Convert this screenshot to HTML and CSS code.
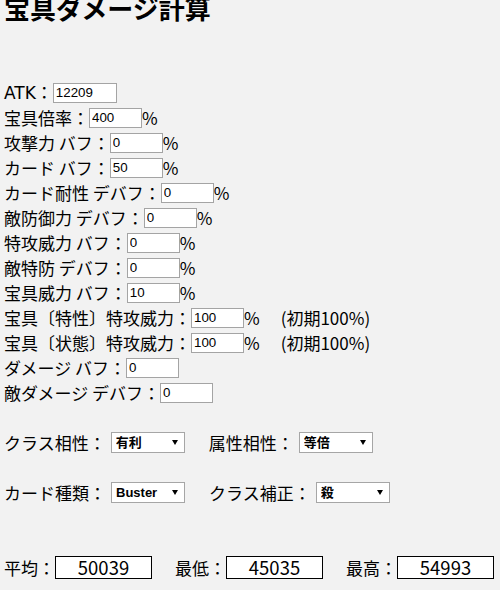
FILE: index.html
```html
<!DOCTYPE html>
<html lang="ja">
<head>
<meta charset="utf-8">
<title>宝具ダメージ計算</title>
<link rel="stylesheet" href="styles.css">
</head>
<body>
<h1 class="title">宝具ダメージ計算</h1>
<div class="form">
  <div class="row"><span class="label"><span class="latin">ATK</span>：</span><input class="num wide" type="text" value="12209"></div>
  <div class="row"><span class="label">宝具倍率：</span><input class="num" type="text" value="400"><span class="pct">%</span></div>
  <div class="row"><span class="label">攻撃力 バフ：</span><input class="num" type="text" value="0"><span class="pct">%</span></div>
  <div class="row"><span class="label">カード バフ：</span><input class="num" type="text" value="50"><span class="pct">%</span></div>
  <div class="row"><span class="label">カード耐性 デバフ：</span><input class="num" type="text" value="0"><span class="pct">%</span></div>
  <div class="row"><span class="label">敵防御力 デバフ：</span><input class="num" type="text" value="0"><span class="pct">%</span></div>
  <div class="row"><span class="label">特攻威力 バフ：</span><input class="num" type="text" value="0"><span class="pct">%</span></div>
  <div class="row"><span class="label">敵特防 デバフ：</span><input class="num" type="text" value="0"><span class="pct">%</span></div>
  <div class="row"><span class="label">宝具威力 バフ：</span><input class="num" type="text" value="10"><span class="pct">%</span></div>
  <div class="row"><span class="label">宝具〔特性〕特攻威力：</span><input class="num" type="text" value="100"><span class="pct">%</span><span class="note">(初期100%)</span></div>
  <div class="row"><span class="label">宝具〔状態〕特攻威力：</span><input class="num" type="text" value="100"><span class="pct">%</span><span class="note">(初期100%)</span></div>
  <div class="row"><span class="label">ダメージ バフ：</span><input class="num" type="text" value="0"></div>
  <div class="row"><span class="label">敵ダメージ デバフ：</span><input class="num" type="text" value="0"></div>

  <div class="row sel-row first-sel">
    <span class="group"><span class="label">クラス相性：</span><span class="select"><select><option>有利</option><option>等倍</option><option>不利</option></select></span></span>
    <span class="group"><span class="label">属性相性：</span><span class="select"><select><option>等倍</option><option>有利</option><option>不利</option></select></span></span>
  </div>
  <div class="row sel-row">
    <span class="group"><span class="label">カード種類：</span><span class="select"><select><option>Buster</option><option>Arts</option><option>Quick</option></select></span></span>
    <span class="group"><span class="label">クラス補正：</span><span class="select"><select><option>殺</option><option>剣</option><option>弓</option></select></span></span>
  </div>

  <div class="row results">
    <span class="group"><span class="label">平均：</span><output class="result">50039</output></span>
    <span class="group"><span class="label">最低：</span><output class="result">45035</output></span>
    <span class="group"><span class="label">最高：</span><output class="result">54993</output></span>
  </div>
</div>
</body>
</html>
```
FILE: styles.css
```css
html, body {
  margin: 0;
  padding: 0;
  background: #f2f2f2;
}

body {
  font-family: "Noto Sans CJK JP", sans-serif;
  font-size: 17px;
  color: #000;
  overflow: hidden;
}

.title {
  margin: -5px 0 59px 0;
  padding-left: 4px;
  font-size: 26px;
  line-height: 26px;
  font-weight: bold;
}

.form {
  padding-left: 4px;
}

.row {
  display: flex;
  align-items: center;
  height: 25px;
  white-space: pre;
  line-height: 25px;
}

.latin {
  font-family: "DejaVu Sans", sans-serif;
}

.num {
  box-sizing: border-box;
  width: 53px;
  height: 20px;
  margin: 0;
  padding: 0 2px;
  border: 1px solid #a4a4a4;
  background: #fff;
  font-family: "Liberation Sans", Arial, sans-serif;
  font-size: 13.33px;
  color: #000;
  outline: none;
}

.num.wide {
  width: 64px;
}

.note {
  margin-left: 21px;
}

.sel-row {
  margin-top: 25px;
}

.group {
  display: flex;
  align-items: center;
}

.sel-row .group + .group {
  margin-left: 24px;
}

.select {
  position: relative;
  display: inline-flex;
  margin-left: 5px;
}

.select select {
  -webkit-appearance: none;
  appearance: none;
  box-sizing: border-box;
  width: 74px;
  height: 21px;
  margin: 0;
  padding: 0 0 0 4px;
  border: 1px solid #a6a6a6;
  border-radius: 0;
  background: #fff;
  font-family: "Liberation Sans", "Noto Sans CJK JP", sans-serif;
  font-size: 13px;
  font-weight: bold;
  color: #000;
  outline: none;
}

.select::after {
  content: "";
  position: absolute;
  right: 7px;
  top: 8px;
  width: 0;
  height: 0;
  border-left: 3.5px solid transparent;
  border-right: 3.5px solid transparent;
  border-top: 5px solid #000;
  pointer-events: none;
}

.results {
  margin-top: 50px;
}

.results .group + .group {
  margin-left: 23px;
}

.result {
  box-sizing: border-box;
  display: block;
  width: 97px;
  height: 23px;
  border: 1px solid #000;
  background: #fff;
  text-align: center;
  font-size: 18.5px;
  line-height: 21px;
}
```
